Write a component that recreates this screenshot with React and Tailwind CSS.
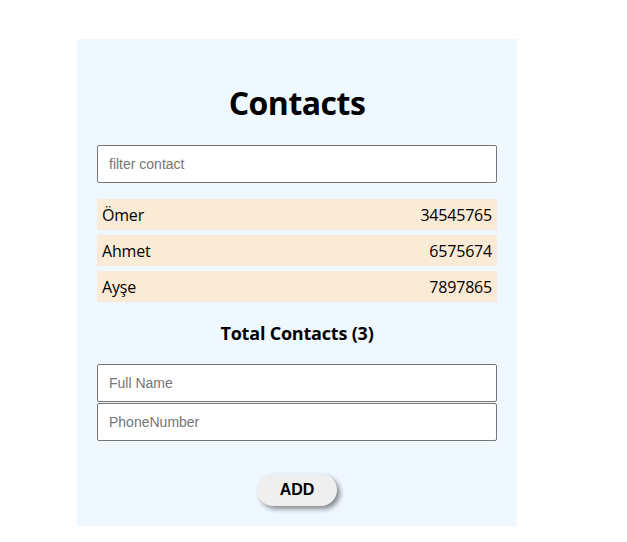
const contacts = [
  { name: 'Ömer', phone: '34545765' },
  { name: 'Ahmet', phone: '6575674' },
  { name: 'Ayşe', phone: '7897865' },
];

function App() {
  return (
    <div className="min-h-[542px] bg-white pt-[39px] font-['Open_Sans',sans-serif] text-black">
      <div className="ml-[77px] w-[440px] bg-[#f0f8ff] px-5 pt-[44px] pb-5">
        <h1 className="h-10 text-center text-[32px] font-bold leading-10 tracking-[-0.5px]">Contacts</h1>

        <input
          className="mt-[22px] block h-[38px] w-full rounded-[2px] border border-[#767676] bg-white px-[11px] font-['Liberation_Sans',sans-serif] text-sm placeholder:text-[#757575] focus:outline-none"
          placeholder="filter contact"
        />

        <ul className="mt-4 flex flex-col gap-[5px]">
          {contacts.map((c) => (
            <li
              key={c.name}
              className="flex h-[31px] items-center justify-between bg-[#faebd7] px-[5px] text-base tracking-[-0.2px]"
            >
              <span>{c.name}</span>
              <span>{c.phone}</span>
            </li>
          ))}
        </ul>

        <p className="mt-[19px] h-6 text-center text-lg font-bold leading-6 tracking-[-0.2px]">
          Total Contacts ({contacts.length})
        </p>

        <div className="mt-[19px] flex flex-col gap-px">
          <input
            className="block h-[38px] w-full rounded-[2px] border border-[#767676] bg-white px-[11px] font-['Liberation_Sans',sans-serif] text-sm placeholder:text-[#757575] focus:outline-none"
            placeholder="Full Name"
          />
          <input
            className="block h-[38px] w-full rounded-[2px] border border-[#767676] bg-white px-[11px] font-['Liberation_Sans',sans-serif] text-sm placeholder:text-[#757575] focus:outline-none"
            placeholder="PhoneNumber"
          />
        </div>

        <div className="mt-[33px] flex justify-center">
          <button className="h-8 w-20 rounded-full bg-[#efefef] font-['Liberation_Sans',sans-serif] text-base font-bold shadow-[3px_3px_5px_rgba(0,0,0,0.45)]">
            ADD
          </button>
        </div>
      </div>
    </div>
  );
}

export default App;
